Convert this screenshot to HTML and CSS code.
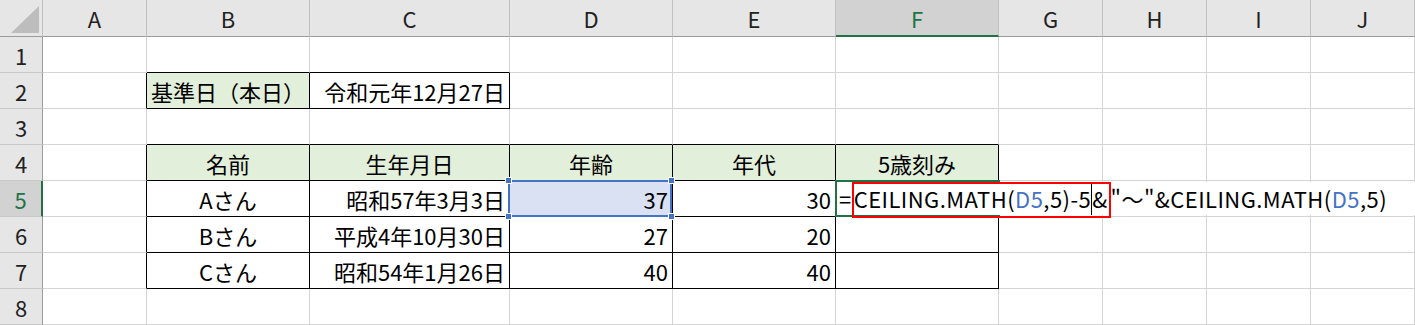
FILE: index.html
```html
<!DOCTYPE html>
<html lang="ja">
<head>
<meta charset="utf-8">
<title>Sheet</title>
<link rel="stylesheet" href="styles.css">
</head>
<body>
<div class="sheet">
  <div class="c corner"><svg class="tri" width="42" height="36" viewBox="0 0 42 36"><polygon points="11,33 39,33 39,6" fill="#bdbdbd"/></svg></div>
  <div class="c ch">A</div><div class="c ch">B</div><div class="c ch">C</div><div class="c ch">D</div><div class="c ch">E</div><div class="c ch on">F</div><div class="c ch">G</div><div class="c ch">H</div><div class="c ch">I</div><div class="c ch">J</div>

  <div class="c rh">1</div>
  <div class="c"></div><div class="c tt"></div><div class="c tt"></div><div class="c"></div><div class="c"></div><div class="c"></div><div class="c"></div><div class="c"></div><div class="c"></div><div class="c"></div>

  <div class="c rh">2</div>
  <div class="c tl"></div><div class="c tb th">基準日（本日）</div><div class="c tb rt">令和元年12月27日</div><div class="c"></div><div class="c"></div><div class="c"></div><div class="c"></div><div class="c"></div><div class="c"></div><div class="c"></div>

  <div class="c rh">3</div>
  <div class="c"></div><div class="c tt"></div><div class="c tt"></div><div class="c tt"></div><div class="c tt"></div><div class="c tt"></div><div class="c"></div><div class="c"></div><div class="c"></div><div class="c"></div>

  <div class="c rh">4</div>
  <div class="c tl"></div><div class="c tb th ctr">名前</div><div class="c tb th ctr">生年月日</div><div class="c tb th ctr">年齢</div><div class="c tb th ctr">年代</div><div class="c tb th ctr">5歳刻み</div><div class="c"></div><div class="c"></div><div class="c"></div><div class="c"></div>

  <div class="c rh on">5</div>
  <div class="c tl"></div><div class="c tb ctr">Aさん</div><div class="c tb rt">昭和57年3月3日</div>
  <div class="c tb rt ref">37<div class="rng"><span class="hd h1"></span><span class="hd h2"></span><span class="hd h3"></span><span class="hd h4"></span></div></div>
  <div class="c tb rt">30</div>
  <div class="c tb fcell">
    <div class="act"></div>
    <div class="edit"><span class="eq">=</span><span class="red">CEILING.MATH(<span class="blue">D5</span>,5)-5<span class="cur"></span>&amp;</span><span class="rest">"～"&amp;CEILING.MATH(<span class="blue">D5</span>,5)</span></div>
  </div>
  <div class="c"></div><div class="c"></div><div class="c"></div><div class="c"></div>

  <div class="c rh">6</div>
  <div class="c tl"></div><div class="c tb ctr">Bさん</div><div class="c tb rt">平成4年10月30日</div><div class="c tb rt">27</div><div class="c tb rt">20</div><div class="c tb"></div><div class="c"></div><div class="c"></div><div class="c"></div><div class="c"></div>

  <div class="c rh">7</div>
  <div class="c tl"></div><div class="c tb ctr">Cさん</div><div class="c tb rt">昭和54年1月26日</div><div class="c tb rt">40</div><div class="c tb rt">40</div><div class="c tb"></div><div class="c"></div><div class="c"></div><div class="c"></div><div class="c"></div>

  <div class="c rh">8</div>
  <div class="c"></div><div class="c"></div><div class="c"></div><div class="c"></div><div class="c"></div><div class="c"></div><div class="c"></div><div class="c"></div><div class="c"></div><div class="c"></div>
</div>
</body>
</html>
```

FILE: styles.css
```css
* { box-sizing: border-box; }
html, body { margin: 0; padding: 0; background: #fff; }
body {
  font-family: "Noto Sans CJK JP", "Noto Sans", sans-serif;
  font-size: 22px;
  color: #000;
  overflow: hidden;
}
.sheet {
  display: grid;
  grid-template-columns: 43px 104px 163px 200px 163px 163px 163px 104px 104px 104px 104px;
  grid-template-rows: 37px repeat(8, 36px);
  width: 1415px;
}
.c {
  border-right: 1px solid #d4d4d4;
  border-bottom: 1px solid #d4d4d4;
  display: flex;
  align-items: center;
  padding: 0 4px;
  white-space: nowrap;
  line-height: 1;
}
.corner {
  background: #e6e6e6;
  border-right-color: #c2c2c2;
  border-bottom-color: #9b9b9b;
  padding: 0;
}
.tri { display: block; }
.ch {
  background: #e6e6e6;
  justify-content: center;
  border-right-color: #c2c2c2;
  border-bottom-color: #9b9b9b;
  color: #222;
}
.rh {
  background: #e6e6e6;
  justify-content: center;
  border-right-color: #9b9b9b;
  border-bottom-color: #c8c8c8;
  color: #222;
}
.ch.on {
  background: #d2d2d2;
  color: #217346;
  border-bottom: 2px solid #217346;
}
.rh.on {
  background: #d2d2d2;
  color: #217346;
  border-right: 2px solid #217346;
}
.tt { border-bottom-color: #000; }
.tl { border-right-color: #000; }
.tb { border-right-color: #000; border-bottom-color: #000; }
.th { background: #e2efda; }
.ctr { justify-content: center; }
.rt { justify-content: flex-end; }

.ref { position: relative; background: #d9e1f2; }
.rng {
  position: absolute;
  left: -2px;
  top: -1px;
  width: 164px;
  height: 37px;
  border: 2px solid #4472c4;
}
.hd {
  position: absolute;
  width: 7px;
  height: 7px;
  background: #4472c4;
  border: 1px solid #fff;
}
.h1 { left: -5px; top: -5px; }
.h2 { right: -5px; top: -5px; }
.h3 { left: -5px; bottom: -5px; }
.h4 { right: -5px; bottom: -5px; }

.fcell { position: relative; padding: 0; }
.act {
  position: absolute;
  left: -1px;
  top: -1px;
  width: 165px;
  height: 37px;
  border: 2px solid #217346;
}
.edit {
  position: absolute;
  left: 1px;
  top: 1px;
  width: 578px;
  height: 33px;
  background: #fff;
  display: flex;
  align-items: flex-start;
  z-index: 2;
  line-height: 33px;
  letter-spacing: 0.45px;
}
.eq { padding-left: 2px; }
.red {
  display: block;
  height: 36px;
  border: 2px solid #ff0000;
  line-height: 29px;
  padding: 0 1px 0 0;
  margin-left: 0;
}
.cur {
  display: inline-block;
  width: 0;
  height: 31px;
  margin-bottom: -2px;
  border-left: 1px solid #000;
  vertical-align: top;
}
.rest { display: block; }
.blue { color: #4472c4; }
```
